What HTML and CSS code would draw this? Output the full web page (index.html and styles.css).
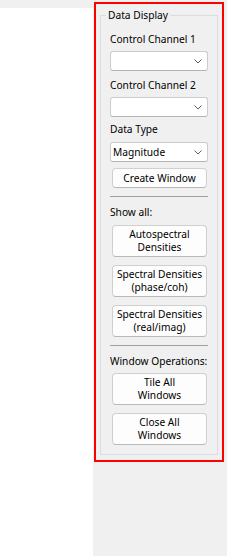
FILE: index.html
```html
<!DOCTYPE html>
<html>
<head>
<meta charset="utf-8">
<link rel="stylesheet" href="styles.css">
</head>
<body>
<div class="page">
  <div class="left"></div>
  <div class="right">
    <div class="hl">
      <fieldset class="group">
        <legend class="legend">Data Display</legend>
        <div class="label first">Control Channel 1</div>
        <div class="combo m5"><span class="val"></span>
          <svg class="chev" width="8" height="5" viewBox="0 0 8 5"><path d="M0.5 0.5 L4 4 L7.5 0.5" fill="none" stroke="#606060" stroke-width="1"/></svg>
        </div>
        <div class="label m8">Control Channel 2</div>
        <div class="combo m5"><span class="val"></span>
          <svg class="chev" width="8" height="5" viewBox="0 0 8 5"><path d="M0.5 0.5 L4 4 L7.5 0.5" fill="none" stroke="#606060" stroke-width="1"/></svg>
        </div>
        <div class="label m6">Data Type</div>
        <div class="combo m6"><span class="val">Magnitude</span>
          <svg class="chev" width="8" height="5" viewBox="0 0 8 5"><path d="M0.5 0.5 L4 4 L7.5 0.5" fill="none" stroke="#606060" stroke-width="1"/></svg>
        </div>
        <button class="btn m6">Create Window</button>
        <div class="sep m8"></div>
        <div class="label m9">Show all:</div>
        <button class="btn tall m6">Autospectral<br>Densities</button>
        <button class="btn tall m8">Spectral Densities<br>(phase/coh)</button>
        <button class="btn tall m8">Spectral Densities<br>(real/imag)</button>
        <div class="sep m8"></div>
        <div class="label m9">Window Operations:</div>
        <button class="btn tall m5">Tile All<br>Windows</button>
        <button class="btn tall m8">Close All<br>Windows</button>
      </fieldset>
    </div>
  </div>
</div>
</body>
</html>
```
FILE: styles.css
```css
html, body {
  margin: 0;
  padding: 0;
}
body {
  width: 227px;
  height: 556px;
  overflow: hidden;
  background: #f0f0f0;
  font-family: "Noto Sans", "Open Sans", sans-serif;
  font-size: 10.2px;
  line-height: 13px;
  color: #000;
}
.page {
  display: flex;
  height: 556px;
}
.left {
  width: 93px;
  margin-top: 8px;
  height: 548px;
  background: #ffffff;
}
.right {
  flex: 1;
  padding: 2px 3px 0 1px;
}
.hl {
  border: 2px solid #ff0000;
  padding: 5px 4px 5px 4px;
}
.group {
  margin: 0;
  border: 1px solid #dcdcdc;
  padding: 0 9px 9px 9px;
  display: flex;
  flex-direction: column;
  min-width: 0;
}
.legend {
  padding: 0 2px;
  margin-left: -4px;
  line-height: 13px;
  font-size: 10.2px;
}
.label {
  height: 13px;
  white-space: nowrap;
}
.first { margin-top: 11px; }
.m5 { margin-top: 5px; }
.m6 { margin-top: 6px; }
.m8 { margin-top: 8px; }
.m9 { margin-top: 9px; }
.combo {
  box-sizing: border-box;
  height: 20px;
  border: 1px solid #cccccc;
  border-bottom-color: #b4b4b4;
  border-radius: 3px;
  background: #ffffff;
  display: flex;
  align-items: center;
  justify-content: space-between;
  padding: 0 5px 0 2px;
}
.val {
  white-space: nowrap;
}
.chev {
  display: block;
  margin-top: 1px;
}
.btn {
  box-sizing: border-box;
  height: 20px;
  margin-left: 2px;
  margin-right: 1px;
  padding: 0;
  border: 1px solid #d0d0d0;
  border-bottom-color: #b8b8b8;
  border-radius: 4px;
  background: #fdfdfd;
  font-family: "Noto Sans", "Open Sans", sans-serif;
  font-size: 10.2px;
  line-height: 13px;
  color: #000;
  text-align: center;
}
.btn.tall {
  height: 32px;
}
.sep {
  height: 1px;
  background: #a0a0a0;
}
```
